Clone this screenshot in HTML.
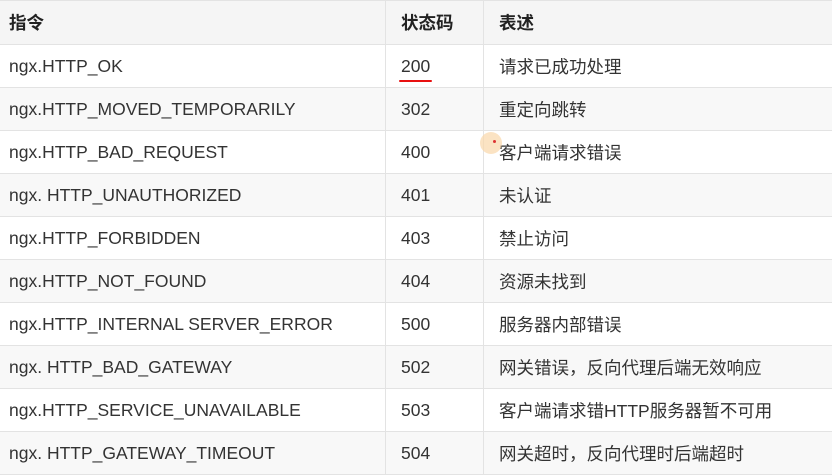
<!DOCTYPE html><html><head><meta charset="utf-8"><style>
body{margin:0;width:832px;height:468px;overflow:hidden;background:#fff;font-family:"Liberation Sans","Noto Sans CJK SC",sans-serif;color:#333;}
table{border-collapse:collapse;width:832px;position:absolute;top:0;left:0;}
td,th{height:42px;border:1px solid #e3e3e3;font-size:17.5px;text-align:left;padding:0;vertical-align:middle;}
th{background:#f5f5f5;font-weight:bold;color:#222;height:43px;}
td:first-child,th:first-child{padding-left:9px;width:376px;border-left:none}
td:nth-child(2),th:nth-child(2){padding-left:15px;width:82px}
td:nth-child(3),th:nth-child(3){padding-left:15px;border-right:none}
tr:nth-child(odd) td{background:#f8f8f8}
.u{position:relative}
.u:after{content:"";position:absolute;left:-2px;right:-2px;bottom:-6px;height:2px;background:#e81010;border-radius:1px}
.dot{position:absolute;left:480px;top:132px;width:22px;height:22px;border-radius:50%;background:rgba(250,215,170,.7)}
.dot:after{content:"";position:absolute;left:13px;top:8px;width:3px;height:3px;border-radius:50%;background:#d33}
</style></head><body>
<table>
<tr><th>指令</th><th>状态码</th><th>表述</th></tr>
<tr><td>ngx.HTTP_OK</td><td><span class="u">200</span></td><td>请求已成功处理</td></tr>
<tr><td>ngx.HTTP_MOVED_TEMPORARILY</td><td>302</td><td>重定向跳转</td></tr>
<tr><td>ngx.HTTP_BAD_REQUEST</td><td>400</td><td>客户端请求错误</td></tr>
<tr><td>ngx. HTTP_UNAUTHORIZED</td><td>401</td><td>未认证</td></tr>
<tr><td>ngx.HTTP_FORBIDDEN</td><td>403</td><td>禁止访问</td></tr>
<tr><td>ngx.HTTP_NOT_FOUND</td><td>404</td><td>资源未找到</td></tr>
<tr><td>ngx.HTTP_INTERNAL SERVER_ERROR</td><td>500</td><td>服务器内部错误</td></tr>
<tr><td>ngx. HTTP_BAD_GATEWAY</td><td>502</td><td>网关错误，反向代理后端无效响应</td></tr>
<tr><td>ngx.HTTP_SERVICE_UNAVAILABLE</td><td>503</td><td>客户端请求错HTTP服务器暂不可用</td></tr>
<tr><td>ngx. HTTP_GATEWAY_TIMEOUT</td><td>504</td><td>网关超时，反向代理时后端超时</td></tr>
</table>
<div class="dot"></div>
</body></html>
